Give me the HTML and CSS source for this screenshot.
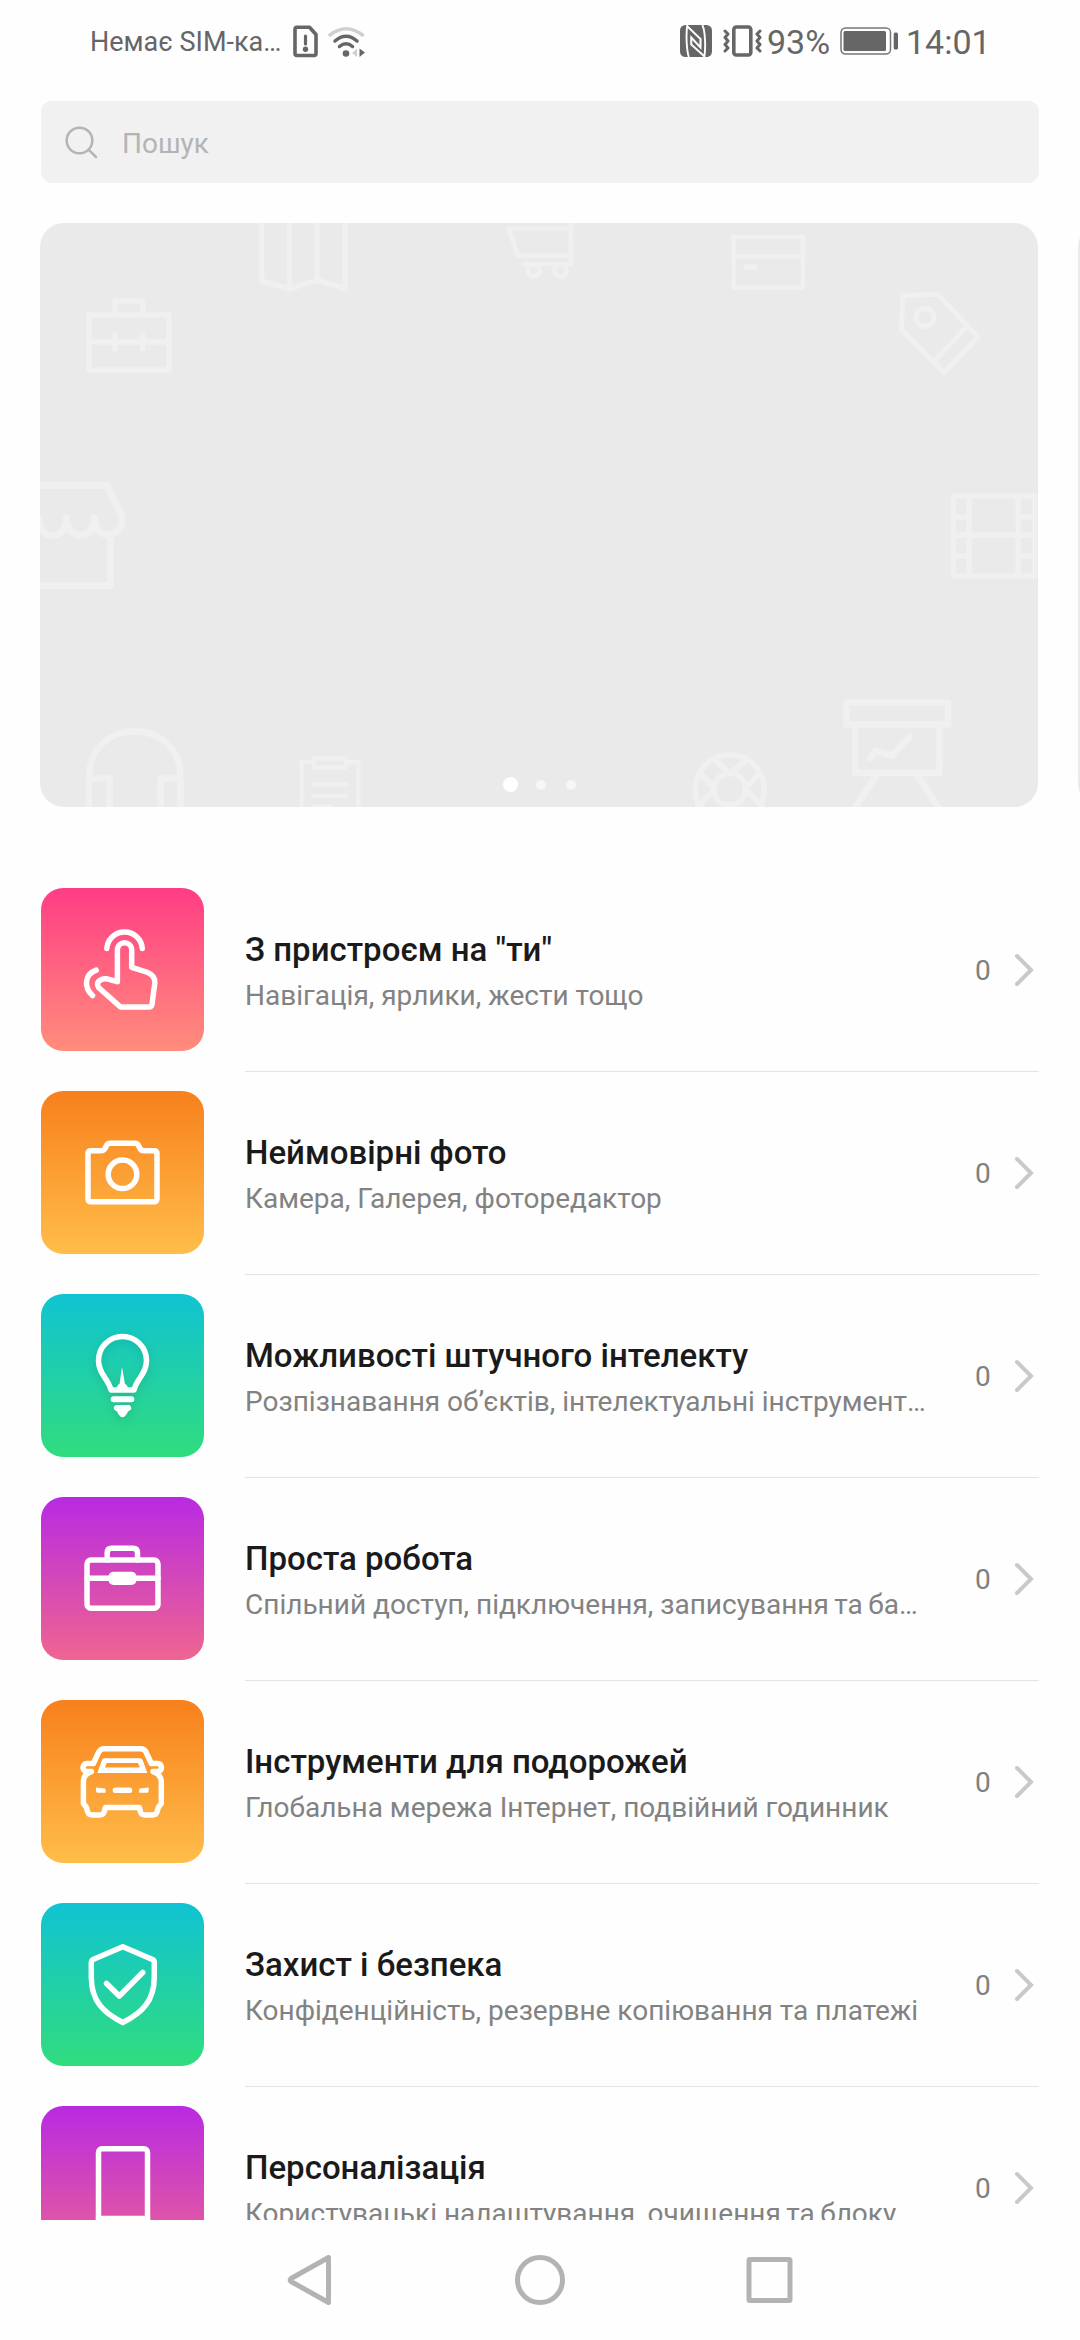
FILE: index.html
```
<!DOCTYPE html>
<html lang="uk">
<head>
<meta charset="utf-8">
<title>Поради</title>
<link rel="stylesheet" href="styles.css">
</head>
<body>
<div class="screen">
  <header class="status">
    <div class="status-left">
      <span class="carrier">Немає SIM-ка…</span>
      <svg class="sim" width="25" height="33" viewBox="0 0 25 33"><path d="M4 2.200H16.500L23 9.500V28.500Q23 30.500 21 30.500H4Q2 30.500 2 28.500V4.200Q2 2.200 4 2.200Z" fill="none" stroke="#666" stroke-width="3.600" stroke-linejoin="round"/><path d="M12.500 11V19" stroke="#666" stroke-width="3.200" stroke-linecap="round"/><circle cx="12.500" cy="24.200" r="2.700" fill="#666"/></svg>
      <svg width="38" height="33" viewBox="0 0 38 33"><g fill="none" stroke="#666" stroke-width="3.500" stroke-linecap="round"><path d="M2 10Q18 -2.500 34.500 10" stroke="#d0d0d0"/><path d="M7 16Q18 6.500 29 16"/><path d="M11.500 21.500Q18 16 24.500 21.500"/></g><circle cx="18" cy="28.500" r="3.300" fill="#666"/><path d="M29 23.500V32L24 28Z" fill="#d0d0d0"/><path d="M31.500 23.500L37 27.500L31.500 32Z" fill="#666"/></svg>
    </div>
    <div class="status-right">
      <svg width="32" height="32" viewBox="0 0 32 32"><rect width="32" height="32" rx="5.500" fill="#666"/><path d="M7.300 0C6 8 6.300 24 8.800 32M24.300 32C25.700 24 25.500 6 22.300 0" fill="none" stroke="#fefefe" stroke-width="1.900"/><path d="M7 1L20.500 14V22.500L11.300 12.500V19.500L24.500 31.500" fill="none" stroke="#fefefe" stroke-width="1.900"/><path d="M11.300 12V20M20.500 13.500V22.500" stroke="#fefefe" stroke-width="1.400"/></svg>
      <svg class="vibrate" width="39" height="32" viewBox="0 0 39 32"><rect x="10.800" y="2" width="17" height="28" rx="2.500" fill="none" stroke="#666" stroke-width="3.600"/><path d="M2 6L5 9L2 12.500L5 16L2 19.500L5 23L2 26M37 6L34 9L37 12.500L34 16L37 19.500L34 23L37 26" fill="none" stroke="#666" stroke-width="3" stroke-linejoin="round" stroke-linecap="round"/></svg>
      <span class="percent">93%</span>
      <svg width="58" height="28" viewBox="0 0 58 28"><rect x="1" y="1" width="49.500" height="26" rx="4.500" fill="none" stroke="#777" stroke-width="1.500"/><rect x="3.500" y="4" width="42.500" height="20" rx="1.500" fill="#666"/><rect x="53.700" y="5.500" width="4.300" height="17" rx="1.500" fill="#666"/></svg>
      <span class="clock">14:01</span>
    </div>
  </header>

  <div class="search">
    <svg width="34" height="34" viewBox="0 0 34 34" fill="none" stroke="#b4b4b4" stroke-width="2.500" stroke-linecap="round"><circle cx="15.500" cy="14.500" r="12.800"/><path d="M24.800 23.800L32 31"/></svg>
    <span>Пошук</span>
  </div>

  <div class="carousel">
    <div class="banner">
      <svg class="pattern" width="998" height="584" viewBox="40 223 998 584" fill="none" stroke="#f0f0f0" stroke-width="5.500" stroke-linejoin="round" stroke-linecap="round">
        <path d="M261.700 215V281L289.600 289L317 280L345.400 289V215M289.600 215V289M317 215V280"/>
        <path stroke-width="4.500" d="M571 215V264H524M571 228.500H508.500L518 255.500H570"/><circle stroke-width="4.500" cx="533.500" cy="270.400" r="6"/><circle stroke-width="4.500" cx="560.500" cy="270.400" r="6"/>
        <path d="M89 315H169V370H89ZM89 342H169M115 315V301H142.700V315M115 335V349M142.700 335V349"/>
        <path stroke-width="4.500" d="M733.500 237H803V287.500H733.500ZM733.500 256.500H803"/><path d="M746.500 267.300H755"/>
        <path stroke-width="5" d="M903 295.500L937.700 294.300L978 337L944 372.500L901.500 329.700ZM967 326.500L934.300 361.300"/><circle stroke-width="5" cx="925" cy="317.400" r="9"/>
        <path stroke-width="7" d="M30 485.500H106.700L120.500 513C125.500 526 116.500 534.500 108 534.500C101 534.500 94.400 530 94.400 518C94.400 530 88 535.500 80.500 535.500C73 535.500 66.500 530 66.500 518C66.500 530 60 535.500 52.500 535.500C45 535.500 38.600 530 38.600 518M110.500 535V585.500H30"/>
        <path d="M953.700 496H1034.500V576H953.700ZM969 496V576M1018 496V576M969 535H1018M953.700 517H969M953.700 535H969M953.700 556H969M1018 517H1034M1018 535H1034M1018 556H1034"/>
        <path stroke-width="6.500" d="M846.500 702.500H948V724.500H846.500ZM855 725V773H939.500V725M869.500 758.300L875.700 751L892 755.500L909.500 737M875.700 776L854 810M917.800 776L940 810"/>
        <circle cx="729.700" cy="789.200" r="34.500"/><circle cx="729.700" cy="789.200" r="16"/><path d="M716 761L729.700 773.500L745.500 761M701 774L715 789L698 806M759 774L745 789L762 806"/>
        <path stroke-width="6.500" d="M89 815V777C89 716 180.500 716 180.500 777V815M89 778.500H109.500V815M180.500 778.500H160.500V815"/>
        <path stroke-width="4.500" d="M314 762H301.500V815M346 762H358.500V815M315 758.500H345L347 763L345 767.500H315L313 763ZM313 784.400H346.500M313 796H346.500M313 806.500H331"/>
      </svg>
      <div class="dots"><i class="dot on"></i><i class="dot"></i><i class="dot"></i></div>
    </div>
    <div class="banner next"></div>
  </div>

  <main class="list">
    <section class="row">
      <svg class="tile pink" viewBox="0 0 163 163"><path d="M65.800 60.500A17.800 17.800 0 0 1 101.300 60.500M76.400 93.700V61A7.200 7.200 0 0 1 90.700 61V79.300L105.500 84Q114.500 87.500 113.800 95L111 116.500Q110.500 119 108 119H79.500L57.500 99.500Q55.500 96 57.500 93.500Q60.500 90 66 90.800L76.400 93.700M55.200 82.200C43.500 86.500 42.500 99 51.500 107.500"/></svg>
      <div class="body"><div class="text"><h2>З пристроєм на "ти"</h2><p>Навігація, ярлики, жести тощо</p></div><span class="count">0</span><svg class="chev" viewBox="0 0 20 34"><path d="M3 3L17 17L3 31"/></svg></div>
    </section>
    <section class="row">
      <svg class="tile orange" viewBox="0 0 163 163"><path d="M50 59.700H60Q62.800 59.700 64 57.500L65.500 54.500Q66.500 52.300 69 52.300H94Q96.500 52.300 97.500 54.500L99 57.500Q100.300 59.700 103 59.700H113Q116 59.700 116 62.700V107.700Q116 110.700 113 110.700H50Q47 110.700 47 107.700V62.700Q47 59.700 50 59.700Z"/><circle cx="81.500" cy="83.300" r="14.300"/></svg>
      <div class="body"><div class="text"><h2>Неймовірні фото</h2><p>Камера, Галерея, фоторедактор</p></div><span class="count">0</span><svg class="chev" viewBox="0 0 20 34"><path d="M3 3L17 17L3 31"/></svg></div>
    </section>
    <section class="row">
      <svg class="tile green" viewBox="0 0 163 163"><g class="bulb"><path d="M70 96H93C96 84 105.500 80 105.500 66.500A24 24 0 0 0 57.500 66.500C57.500 80 67 84 70 96Z"/><path class="solid" d="M81 73L84 90Q87 91 87.500 97H75Q75.500 91 78.500 90Z"/><path stroke-width="6" d="M72.700 105.200H90.300"/><path class="solid" d="M75 111H88Q91 112 90 115.500L87 117.500Q84.500 123.300 81.500 123.300Q78.500 123.300 76 117.500L73 115.500Q72 112 75 111Z"/></g></svg>
      <div class="body"><div class="text"><h2>Можливості штучного інтелекту</h2><p>Розпізнавання об’єктів, інтелектуальні інструмент…</p></div><span class="count">0</span><svg class="chev" viewBox="0 0 20 34"><path d="M3 3L17 17L3 31"/></svg></div>
    </section>
    <section class="row">
      <svg class="tile purple" viewBox="0 0 163 163"><rect x="46" y="63" width="71" height="48.300" rx="4"/><path d="M66.200 63V56Q66.200 51.300 70.500 51.300H92Q96.500 51.300 96.500 56V63M46 81.300H117"/><rect class="solid" x="67.500" y="74.700" width="28" height="13.300" rx="5"/></svg>
      <div class="body"><div class="text"><h2>Проста робота</h2><p>Спільний доступ, підключення, записування<span class="tight"> та ба…</span></p></div><span class="count">0</span><svg class="chev" viewBox="0 0 20 34"><path d="M3 3L17 17L3 31"/></svg></div>
    </section>
    <section class="row">
      <svg class="tile orange" viewBox="0 0 163 163"><path d="M50.500 71.500H45C40.500 69.500 41.500 64 46 63.500H52.400L57.700 52Q59.500 48.700 63 48.700H99.700Q103.500 48.700 105 52L110.300 63.500H116.700C121 64 122 69.500 117.500 71.500H112C117 73 120.300 77 120.300 82V103.500L117.500 107L116 112Q115 115 111.500 115H104Q100.500 115 99.500 112L98.300 107.500H64.400L63.200 112Q62.200 115 58.700 115H51.200Q47.700 115 46.700 112L45.200 107L42.400 103.500V82C42.400 77 45.500 73 50.500 71.500Z"/><path class="solid" fill-rule="evenodd" d="M63.500 58.300H99Q101 58.300 101.700 60L106.300 73H56.300L61 60Q61.700 58.300 63.500 58.300ZM65.700 63L64 67.500H98.700L97 63Z"/><path class="solid" d="M55 87.500L64 88.500Q65 90.500 64.500 92.800H56Q54.500 91 55 87.500ZM107.700 87.500L98.700 88.500Q97.700 90.500 98.200 92.800H106.700Q108.200 91 107.700 87.500Z"/><rect class="solid" x="71.700" y="87.500" width="19.500" height="5.500" rx="2.500"/></svg>
      <div class="body"><div class="text"><h2>Інструменти для подорожей</h2><p>Глобальна мережа Інтернет, подвійний годинник</p></div><span class="count">0</span><svg class="chev" viewBox="0 0 20 34"><path d="M3 3L17 17L3 31"/></svg></div>
    </section>
    <section class="row">
      <svg class="tile green" viewBox="0 0 163 163"><path d="M81.800 43.700L111.500 56.500Q113.300 57.500 113.300 59.500V74C113.300 98 101 110 81.800 119.500C62.500 110 50.300 98 50.300 74V59.500Q50.300 57.500 52 56.500ZM65.500 80.500L78.300 93L101.700 69.500"/></svg>
      <div class="body"><div class="text"><h2>Захист і безпека</h2><p>Конфіденційність, резервне копіювання та платежі</p></div><span class="count">0</span><svg class="chev" viewBox="0 0 20 34"><path d="M3 3L17 17L3 31"/></svg></div>
    </section>
    <section class="row">
      <svg class="tile purple" viewBox="0 0 163 163"><rect x="57.500" y="42.800" width="49" height="78" rx="3.500"/><path d="M57.500 112.500H106.500"/></svg>
      <div class="body"><div class="text"><h2>Персоналізація</h2><p>Користувацькі налаштування, очищення<span class="tight"> та блоку</span></p></div><span class="count">0</span><svg class="chev" viewBox="0 0 20 34"><path d="M3 3L17 17L3 31"/></svg></div>
    </section>
  </main>

  <nav class="nav">
    <svg width="60" height="60" viewBox="0 0 60 60"><path d="M49.500 7.500V52.500L12 31.500Q10.500 30 12 28.500Z"/></svg>
    <svg width="60" height="60" viewBox="0 0 60 60"><circle cx="30" cy="30" r="22.500"/></svg>
    <svg width="60" height="60" viewBox="0 0 60 60"><rect x="8" y="9.500" width="41" height="41" rx="1"/></svg>
  </nav>
</div>
</body>
</html>
```
FILE: styles.css
```
* { box-sizing: border-box; }

body {
  margin: 0;
  background: #fefefe;
  font-family: Roboto, sans-serif;
}

svg { display: block; flex: none; }
h2, p { margin: 0; }

.screen {
  width: 1080px;
  height: 2340px;
  display: flex;
  flex-direction: column;
  overflow: hidden;
}

/* Status bar */
.status {
  flex: none;
  height: 83px;
  padding-left: 90px;
  display: flex;
  color: #666;
  white-space: nowrap;
}
.status-left {
  width: 590px;
  height: 100%;
  display: flex;
  align-items: center;
}
.carrier { width: 203px; font-size: 27px; }
.sim { margin-right: 10px; }
.status-right {
  height: 100%;
  display: flex;
  align-items: center;
  font-size: 34px;
}
.status-right svg { margin-top: -2px; }
.status-right .vibrate { margin-left: 11px; }
.percent { width: 73px; margin-left: 5px; }
.clock { margin-left: 8px; }

/* Search field */
.search {
  flex: none;
  height: 82px;
  margin: 18px 41px 0;
  padding-left: 23px;
  display: flex;
  align-items: center;
  gap: 24px;
  background: #f1f1f1;
  border-radius: 11px;
  font-size: 28px;
  color: #b4b4b4;
}
.search svg { margin-top: 1px; }
.search span { padding-top: 2px; }

/* Carousel */
.carousel {
  flex: none;
  height: 584px;
  margin-top: 40px;
  padding-left: 40px;
  display: flex;
  gap: 40px;
  overflow: hidden;
}
.banner {
  position: relative;
  flex: none;
  width: 998px;
  height: 584px;
  border-radius: 24px;
  background: #eaeaea;
  overflow: hidden;
}
.dots {
  position: absolute;
  left: 0;
  right: 0;
  bottom: 15px;
  display: flex;
  align-items: center;
  justify-content: center;
  gap: 20px;
}
.dot { width: 10px; height: 10px; border-radius: 50%; background: #f7f7f7; }
.dot.on { width: 15px; height: 15px; margin-right: -2px; background: #fff; }

/* Topic list */
.list {
  flex: none;
  height: 1413px;
  padding: 62px 41px 0;
  overflow: hidden;
}
.row { display: flex; gap: 41px; height: 203px; }
.tile {
  width: 163px;
  height: 163px;
  margin-top: 19px;
  border-radius: 22px;
  fill: none;
  stroke: #fff;
  stroke-width: 5.5px;
  stroke-linecap: round;
  stroke-linejoin: round;
}
.tile .solid { fill: #fff; stroke: none; }
.bulb { filter: drop-shadow(0 3px 5px rgba(0, 90, 70, 0.2)); }
.pink { background: linear-gradient(#ff3d85, #ff8d7c); }
.orange { background: linear-gradient(#f7801c, #ffbd4a); }
.green { background: linear-gradient(#10c3d2, #31dc7e); }
.purple { background: linear-gradient(#b82ae2, #ef6590); }

.body {
  flex: 1;
  min-width: 0;
  display: flex;
  border-bottom: 1px solid #e4e4e4;
}
.text { width: 684px; padding-top: 58px; white-space: nowrap; }
.text h2 { font-size: 33px; line-height: 46px; font-weight: 500; color: #1a1a1a; }
.text p { font-size: 28px; line-height: 45px; color: #828282; }
.tight { word-spacing: -1.5px; }
.count {
  margin-left: 46px;
  width: 16px;
  padding-top: 20px;
  font-size: 28px;
  line-height: 164px;
  color: #808080;
}
.chev {
  width: 20px;
  height: 34px;
  margin: 84px 0 0 23px;
  fill: none;
  stroke: #c9c9c9;
  stroke-width: 4px;
  stroke-linecap: round;
}

/* Navigation bar */
.nav {
  flex: 1;
  display: flex;
  align-items: center;
  justify-content: center;
  gap: 171px;
}
.nav svg { fill: none; stroke: #b3b3b3; stroke-width: 5px; stroke-linejoin: round; }
```
